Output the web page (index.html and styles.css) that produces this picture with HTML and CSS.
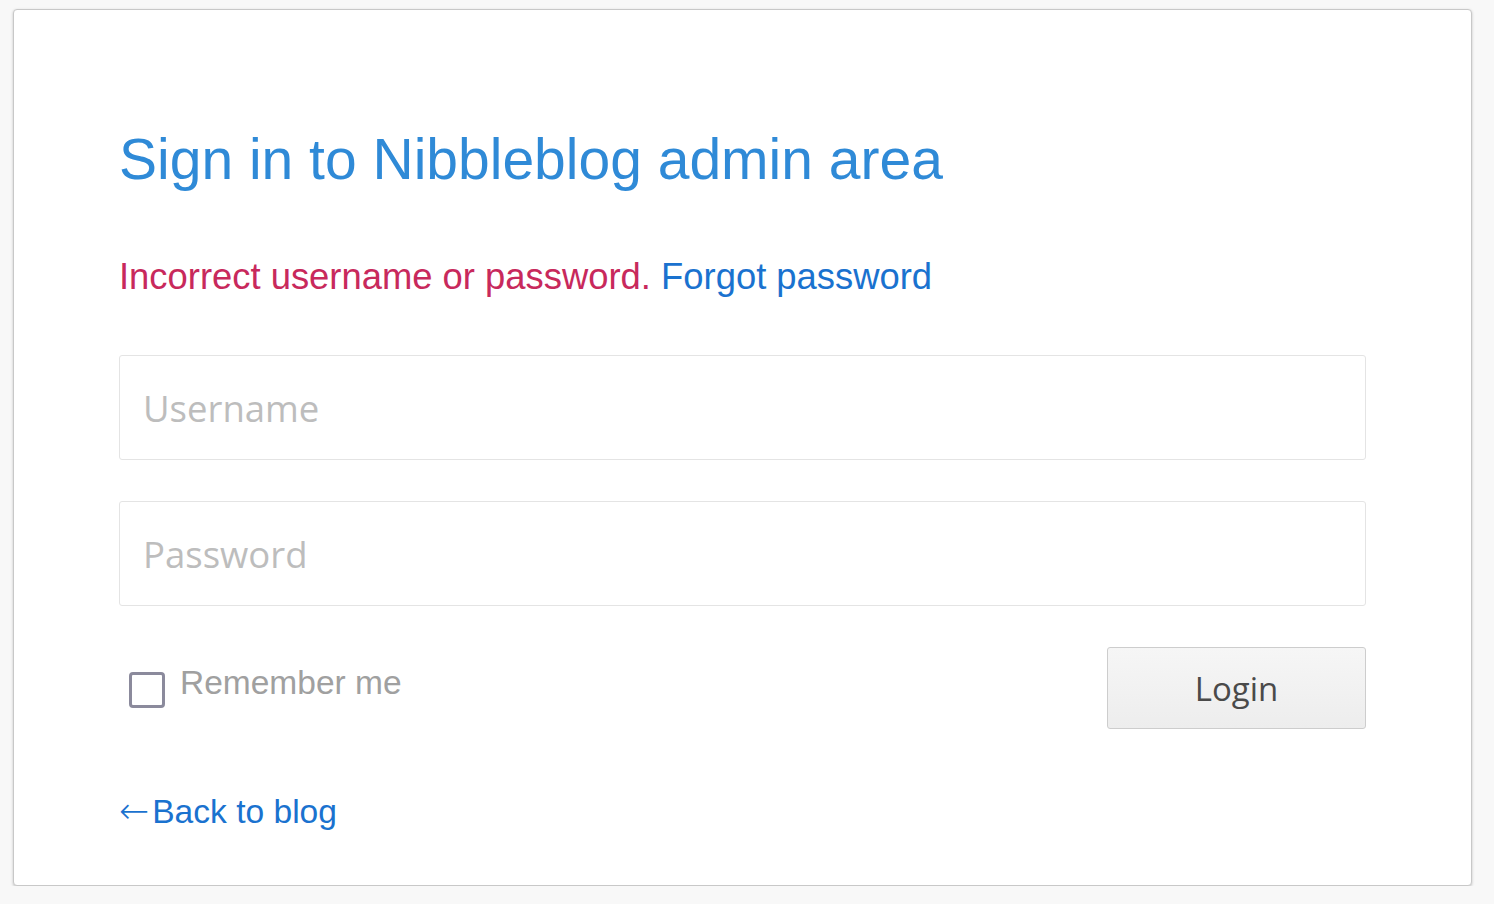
FILE: index.html
```html
<!DOCTYPE html>
<html lang="en">
<head>
<meta charset="utf-8">
<title>Nibbleblog - Sign in</title>
<link rel="stylesheet" href="styles.css">
</head>
<body>
<div class="card">
  <h1 class="title">Sign in to Nibbleblog admin area</h1>
  <p class="msg"><span class="error">Incorrect username or password.</span> <a class="link" href="#">Forgot password</a></p>
  <form class="form">
    <input class="field" type="text" placeholder="Username">
    <input class="field field-second" type="password" placeholder="Password">
    <div class="row">
      <label class="remember"><input class="check" type="checkbox"><span class="remember-text">Remember me</span></label>
      <button class="btn" type="button">Login</button>
    </div>
  </form>
  <a class="back" href="#"><span class="arrow">←</span>Back to blog</a>
</div>
</body>
</html>
```

FILE: styles.css
```css
html, body {
  margin: 0;
  padding: 0;
  background: #f8f8f8;
}
body {
  font-family: "Liberation Sans", Arial, sans-serif;
  padding: 9px 0 0 13px;
}
.card {
  box-sizing: border-box;
  width: 1459px;
  height: 877px;
  background: #fff;
  border: 1px solid #c8c8c8;
  border-radius: 4px;
  box-shadow: 0 1px 3px rgba(0,0,0,0.22);
  padding: 118px 105px 0 105px;
  display: flex;
  flex-direction: column;
}
.title {
  margin: 0;
  font-weight: normal;
  font-size: 57px;
  line-height: 63px;
  color: #2f8ad7;
}
.msg {
  margin: 66px 0 0 0;
  font-size: 36.4px;
  line-height: 40px;
  white-space: nowrap;
}
.error { color: #c8295c; }
.link { color: #1a72cf; text-decoration: none; }
.form {
  margin: 58px 0 0 0;
  display: flex;
  flex-direction: column;
}
.field {
  box-sizing: border-box;
  width: 100%;
  height: 105px;
  margin: 0;
  padding: 0 23px;
  border: 1px solid #e4e4e4;
  border-radius: 3px;
  background: #fff;
  font-family: "Open Sans", sans-serif;
  font-size: 36.5px;
  color: #555;
  outline: none;
}
.field::placeholder { color: #bdbdbd; }
.field-second { margin-top: 41px; }
.row {
  margin-top: 41px;
  height: 82px;
  display: flex;
  justify-content: space-between;
  align-items: center;
}
.remember {
  display: flex;
  align-items: center;
  padding-left: 10px;
}
.check {
  appearance: none;
  -webkit-appearance: none;
  box-sizing: border-box;
  width: 36px;
  height: 36px;
  margin: 4px 0 0 0;
  border: 3px solid #8b8a9c;
  border-radius: 4px;
  background: #fff;
}
.remember-text {
  margin-left: 15px;
  margin-top: -10px;
  font-size: 33.5px;
  color: #a0a0a0;
}
.btn {
  box-sizing: border-box;
  width: 259px;
  height: 82px;
  border: 1px solid #cdcdcd;
  border-radius: 3px;
  background: linear-gradient(#f6f6f6, #ededed);
  font-family: "Open Sans", sans-serif;
  font-size: 33px;
  color: #4a4a4a;
  padding: 0;
  margin: 0;
}
.back {
  margin-top: 62px;
  align-self: flex-start;
  font-size: 33.6px;
  line-height: 40px;
  color: #1a72cf;
  text-decoration: none;
}
.arrow {
  font-family: "DejaVu Sans", sans-serif;
  font-weight: 200;
  font-size: 36px;
  line-height: 40px;
  margin-right: 3px;
}
```
